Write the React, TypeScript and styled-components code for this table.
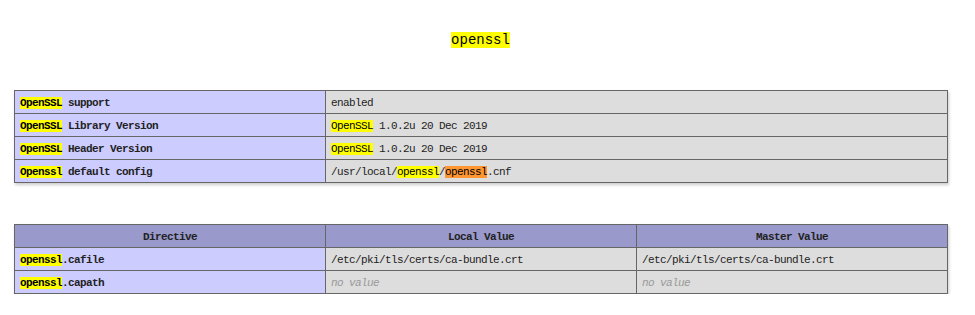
import React from "react";
import styled, { createGlobalStyle } from "styled-components";

const GlobalStyle = createGlobalStyle`
  body {
    margin: 0;
    background: #fff;
    color: #222;
    font-family: "Liberation Mono", "DejaVu Sans Mono", monospace;
  }
`;

const Page = styled.div`
  width: 961px;
  padding-top: 32px;
`;

const Title = styled.h2`
  margin: 0 0 42px;
  text-align: center;
  font-size: 14px;
  line-height: 16px;
  font-weight: normal;
  color: #222;
`;

const Table = styled.table<{ $gap?: number }>`
  width: 933px;
  margin: ${p => p.$gap || 0}px 0 0 14px;
  border-collapse: collapse;
  table-layout: fixed;
  box-shadow: 1px 2px 3px #ccc;
`;

const Cell = styled.td<{ $kind: "e" | "v" | "h" }>`
  border: 1px solid #666;
  padding: 5px 5px 3px;
  height: 14px;
  font-size: 11px;
  line-height: 14px;
  letter-spacing: -0.6px;
  vertical-align: baseline;
  white-space: nowrap;
  background-color: ${p => (p.$kind === "e" ? "#ccf" : p.$kind === "h" ? "#99c" : "#ddd")};
  font-weight: ${p => (p.$kind === "v" ? "normal" : "bold")};
  text-align: ${p => (p.$kind === "h" ? "center" : "left")};
`;

const Mark = styled.span<{ $active?: boolean }>`
  background-color: ${p => (p.$active ? "#ff9632" : "#ff0")};
  color: #000;
`;

const NoValue = styled.i`
  color: #999;
`;

function Hit({ text, active }: { text: string; active?: boolean }) {
  return <Mark $active={active}>{text}</Mark>;
}

const infoRows: { label: React.ReactNode; value: React.ReactNode }[] = [
  { label: <><Hit text="OpenSSL" /> support</>, value: "enabled" },
  { label: <><Hit text="OpenSSL" /> Library Version</>, value: <><Hit text="OpenSSL" /> 1.0.2u 20 Dec 2019</> },
  { label: <><Hit text="OpenSSL" /> Header Version</>, value: <><Hit text="OpenSSL" /> 1.0.2u 20 Dec 2019</> },
  {
    label: <><Hit text="Openssl" /> default config</>,
    value: <>/usr/local/<Hit text="openssl" />/<Hit text="openssl" active />.cnf</>,
  },
];

const directives = [
  { name: "cafile", local: "/etc/pki/tls/certs/ca-bundle.crt", master: "/etc/pki/tls/certs/ca-bundle.crt" },
  { name: "capath", local: null, master: null },
];

function Value({ v }: { v: string | null }) {
  return v ? <>{v}</> : <NoValue>no value</NoValue>;
}

export default function App() {
  return (
    <Page>
      <GlobalStyle />
      <Title><Hit text="openssl" /></Title>

      <Table>
        <colgroup>
          <col style={{ width: 311 }} />
          <col style={{ width: 622 }} />
        </colgroup>
        <tbody>
          {infoRows.map((row, i) => (
            <tr key={i}>
              <Cell $kind="e">{row.label}</Cell>
              <Cell $kind="v">{row.value}</Cell>
            </tr>
          ))}
        </tbody>
      </Table>

      <Table $gap={41}>
        <colgroup>
          <col style={{ width: 311 }} />
          <col style={{ width: 311 }} />
          <col style={{ width: 311 }} />
        </colgroup>
        <tbody>
          <tr>
            <Cell as="th" $kind="h">Directive</Cell>
            <Cell as="th" $kind="h">Local Value</Cell>
            <Cell as="th" $kind="h">Master Value</Cell>
          </tr>
          {directives.map(d => (
            <tr key={d.name}>
              <Cell $kind="e"><Hit text="openssl" />.{d.name}</Cell>
              <Cell $kind="v"><Value v={d.local} /></Cell>
              <Cell $kind="v"><Value v={d.master} /></Cell>
            </tr>
          ))}
        </tbody>
      </Table>
    </Page>
  );
}
